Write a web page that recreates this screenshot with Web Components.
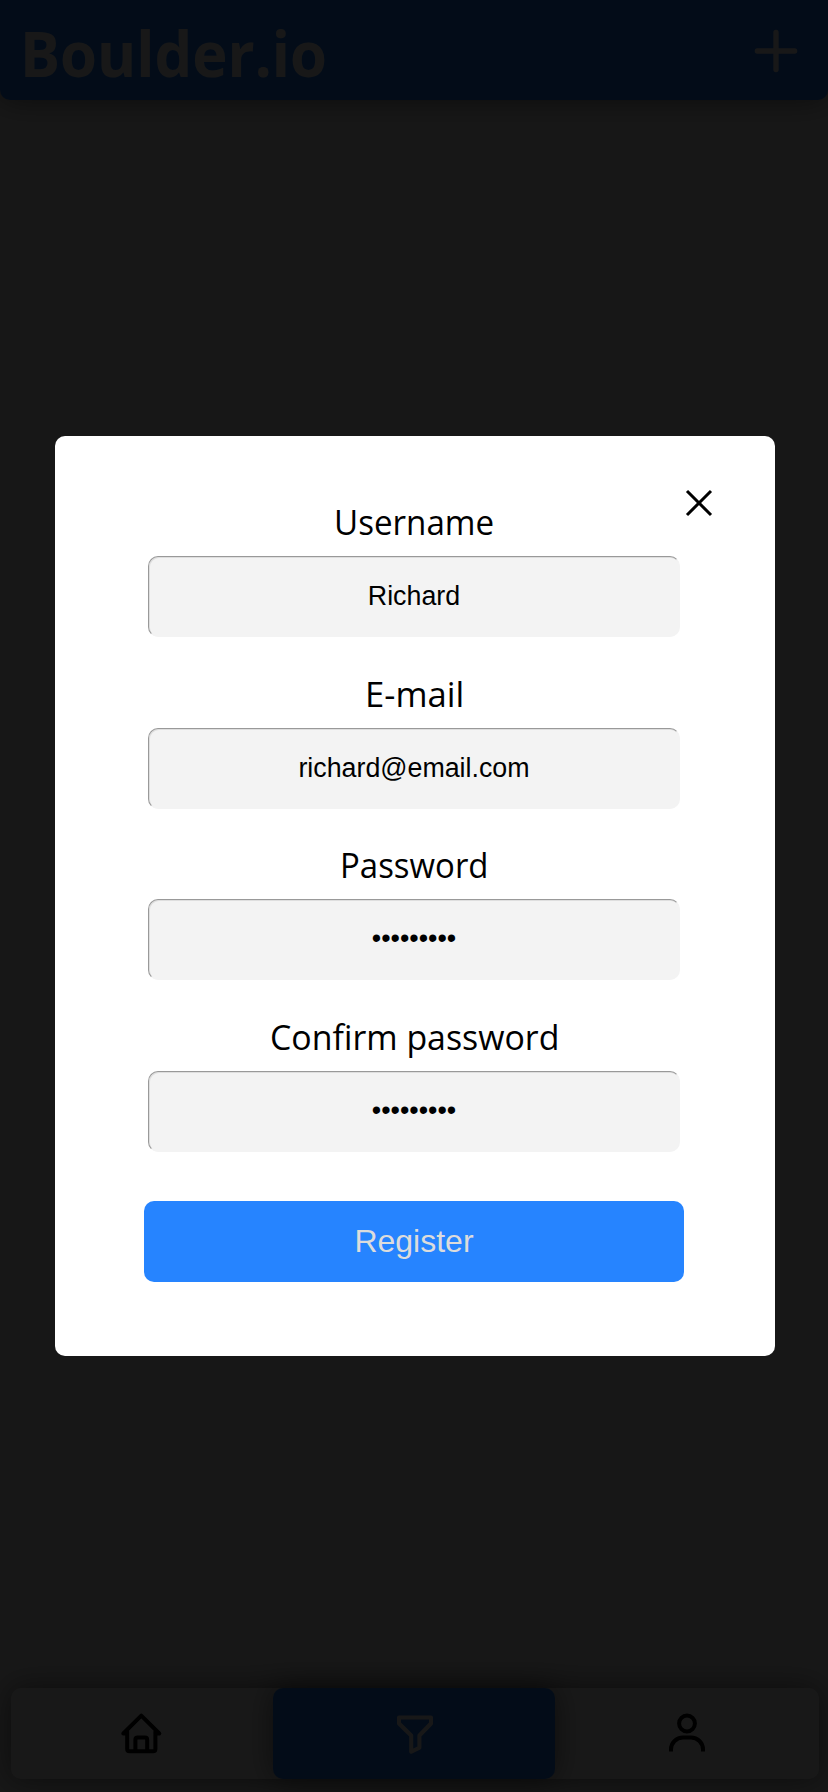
<!DOCTYPE html>
<html lang="en">
<head>
<meta charset="utf-8">
<title>Boulder.io</title>
<style>
html, body { margin: 0; height: 100%; overflow: hidden; background: #fff; }
body { font-family: "Open Sans", "Noto Sans", sans-serif; }
</style>
</head>
<body>
<boulder-app></boulder-app>
<script>
class Base extends HTMLElement {
  connectedCallback() {
    if (this.shadowRoot) return;
    this.attachShadow({ mode: "open" }).innerHTML = this.render();
    this.ready();
  }
  ready() {}
}

/* Text squeezed horizontally to a given advance width */
class FitText extends Base {
  render() {
    return `<style>
      :host { display: block; white-space: nowrap; }
      div { display: flex; }
      span { display: block; transform-origin: 0 50%; }
    </style><div><span><slot></slot></span></div>`;
  }
  ready() {
    const w = Number(this.getAttribute("width"));
    const span = this.shadowRoot.querySelector("span");
    this.style.width = w + "px";
    span.style.transform = `scaleX(${w / span.offsetWidth})`;
  }
}
customElements.define("fit-text", FitText);

class AppHeader extends Base {
  render() {
    return `<style>
      :host { display: flex; box-sizing: border-box; height: 100px; padding: 0 30px 0 19.5px;
        justify-content: space-between; align-items: flex-start; background: #2684ff; color: #fff;
        border-radius: 0 0 10px 10px; box-shadow: 0 0 30px rgba(0,0,0,.5); }
      fit-text { font-size: 63px; font-weight: 700; line-height: 86px; margin-top: 10px; }
      svg { width: 44px; height: 44px; margin-top: 28.5px; }
    </style>
    <fit-text width="307">Boulder.io</fit-text>
    <svg viewBox="0 0 44 44" fill="none" stroke="currentColor" stroke-width="5.3" stroke-linecap="round"><path d="M22 3.4v37.2M3.4 22h37.2"/></svg>`;
  }
}
customElements.define("app-header", AppHeader);

class NavItem extends Base {
  render() {
    return `<style>
      :host { display: flex; align-items: center; justify-content: center; border-radius: 10px; color: #000; }
      :host([active]) { background: #2684ff; color: #fff; box-shadow: 0 0 30px rgba(0,0,0,.5); }
      ::slotted(svg) { display: block; width: 44px; height: 44px; }
    </style><slot></slot>`;
  }
}
customElements.define("nav-item", NavItem);

class AppNav extends Base {
  render() {
    return `<style>
      :host { display: grid; grid-template-columns: 262px 282px 263.5px; height: 91px; margin: 0 9.5px 13px 11px;
        border-radius: 10px; background: #fff; box-shadow: 0 0 30px rgba(0,0,0,.5); }
      svg { fill: none; stroke: currentColor; stroke-width: 4; stroke-linejoin: round; }
      .home { margin-right: 2px; }
      .filter { margin-left: 2px; }
    </style>
    <nav-item><svg class="home" viewBox="119 1711.5 44 44" stroke-linecap="round"><path d="M127 1733h-3.7l18-17.8 18 17.8h-3.7M127.2 1731v17.5q0 2.3 2.3 2.3h23.6q2.3 0 2.3-2.3V1731M135.4 1750v-10.7q0-2.2 2.2-2.2h7.4q2.2 0 2.2 2.2V1750"/></svg></nav-item>
    <nav-item active><svg class="filter" viewBox="393 1711.5 44 44"><path d="M399 1717h32v6l-11.6 12v12.2l-8.2 4V1735L399 1723z"/></svg></nav-item>
    <nav-item><svg class="user" viewBox="664.7 1711.5 44 44"><circle cx="686.7" cy="1723" r="7.9"/><path d="M670.7 1751v-2a12 12 0 0 1 12-12h8a12 12 0 0 1 12 12v2"/></svg></nav-item>`;
  }
}
customElements.define("app-nav", AppNav);

class FormField extends Base {
  render() {
    return `<style>
      :host { display: flex; flex-direction: column; align-items: center; gap: 11px; }
      fit-text { font-size: 35.5px; line-height: 48px; color: #000; margin-left: 1.5px; }
      .box { box-sizing: border-box; width: 532px; height: 81px; border-radius: 10px; background: #f3f3f3;
        border: 1.4px solid; border-color: #999 #f3f3f3 #f3f3f3 #999; box-shadow: inset 1px 1px 0 #dedede;
        font: 26.8px/78px "Liberation Sans", Arial, sans-serif; text-align: center; color: #000; }
      :host([masked]) .box { line-height: 76px; }
    </style>
    <fit-text width="${this.getAttribute("label-width")}">${this.getAttribute("label")}</fit-text>
    <div class="box"><slot></slot></div>`;
  }
}
customElements.define("form-field", FormField);

class RegisterDialog extends Base {
  render() {
    return `<style>
      :host { display: flex; flex-direction: column; align-items: center; box-sizing: border-box; position: relative;
        width: 720px; height: 920px; padding-top: 61px; margin-left: 1.4px; background: #fff; border-radius: 10px; }
      .fields { display: flex; flex-direction: column; gap: 31.5px; margin-right: 1.4px; }
      button { width: 540px; height: 80.5px; margin: 49.5px 1.4px 0 0; padding: 0; border: 0; border-radius: 10px;
        background: #2684ff; color: #dcdcdc; font: 32px "Liberation Sans", Arial, sans-serif; }
      .close { position: absolute; top: 51.7px; right: 61px; width: 30px; height: 30px; }
    </style>
    <div class="fields">
      <form-field label="Username" label-width="160.5">Richard</form-field>
      <form-field label="E-mail" label-width="99.5">richard@email.com</form-field>
      <form-field masked label="Password" label-width="148.5">•••••••••</form-field>
      <form-field masked label="Confirm password" label-width="289">•••••••••</form-field>
    </div>
    <button>Register</button>
    <svg class="close" viewBox="0 0 30 30" fill="none" stroke="#000" stroke-width="3"><path d="M3 3l24 24M27 3L3 27"/></svg>`;
  }
}
customElements.define("register-dialog", RegisterDialog);

class BoulderApp extends Base {
  render() {
    return `<style>
      :host { display: flex; flex-direction: column; height: 1792px; background: #f4f4f4; justify-content: space-between; }
      .overlay { position: fixed; inset: 0; display: flex; align-items: center; justify-content: center; background: rgba(0,0,0,.906); }
    </style>
    <app-header></app-header>
    <app-nav></app-nav>
    <div class="overlay"><register-dialog></register-dialog></div>`;
  }
}
customElements.define("boulder-app", BoulderApp);
</script>
</body>
</html>
